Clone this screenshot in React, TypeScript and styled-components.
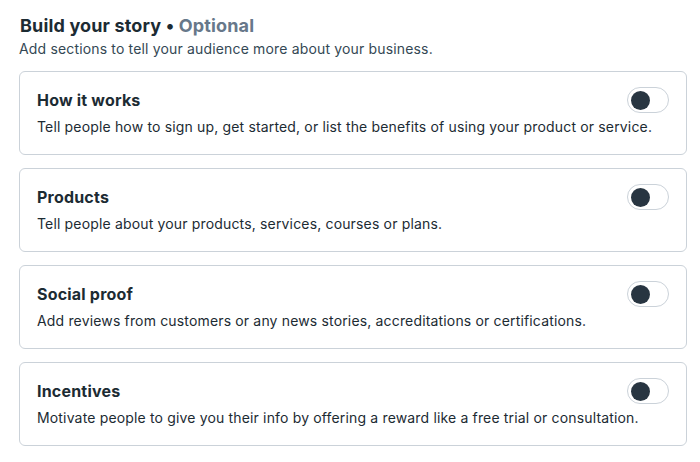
import React from "react";
import styled, { createGlobalStyle } from "styled-components";

const GlobalStyle = createGlobalStyle`
  html, body {
    margin: 0;
    padding: 0;
    background: #ffffff;
  }
  body {
    font-family: Inter, "Noto Sans", "Liberation Sans", sans-serif;
    color: #1c2b33;
  }
`;

const Page = styled.div`
  width: 700px;
  padding: 14px 13px 0 19px;
  box-sizing: border-box;
`;

const Heading = styled.h2`
  margin: 0 0 0 1px;
  font-size: 18px;
  line-height: 24px;
  font-weight: 700;
  color: #1c2b33;
  letter-spacing: 0.15px;
`;

const Muted = styled.span`
  color: #67788a;
`;

const Subtitle = styled.p`
  margin: 1px 0 0 0;
  font-size: 14px;
  line-height: 20px;
  color: #344854;
  letter-spacing: 0.16px;
`;

const List = styled.div`
  display: flex;
  flex-direction: column;
  gap: 13px;
  margin-top: 12px;
`;

const Card = styled.div`
  height: 84px;
  box-sizing: border-box;
  border: 1px solid #cbd2d9;
  border-radius: 6px;
  padding: 15px 17px 0 17px;
  display: flex;
  flex-direction: column;
`;

const CardHead = styled.div`
  display: flex;
  align-items: center;
  justify-content: space-between;
  height: 26px;
`;

const CardTitle = styled.div`
  font-size: 16px;
  font-weight: 700;
  color: #1c2b33;
  letter-spacing: 0.2px;
`;

const CardText = styled.div`
  margin-top: 4px;
  font-size: 14px;
  line-height: 20px;
  color: #1c2b33;
  letter-spacing: 0.16px;
`;

const Toggle = styled.button<{ $on?: boolean }>`
  width: 42px;
  height: 26px;
  margin-right: 0;
  padding: 0 3px;
  box-sizing: border-box;
  border: 1px solid #cbd2d9;
  border-radius: 13px;
  background: #ffffff;
  display: flex;
  align-items: center;
  justify-content: ${(p) => (p.$on ? "flex-end" : "flex-start")};
  cursor: pointer;
`;

const Knob = styled.span`
  width: 19px;
  height: 19px;
  border-radius: 50%;
  background: #283541;
`;

const sections = [
  {
    title: "How it works",
    text: "Tell people how to sign up, get started, or list the benefits of using your product or service.",
  },
  {
    title: "Products",
    text: "Tell people about your products, services, courses or plans.",
  },
  {
    title: "Social proof",
    text: "Add reviews from customers or any news stories, accreditations or certifications.",
  },
  {
    title: "Incentives",
    text: "Motivate people to give you their info by offering a reward like a free trial or consultation.",
  },
];

export default function App() {
  return (
    <>
      <GlobalStyle />
      <Page>
        <Heading>
          Build your story • <Muted>Optional</Muted>
        </Heading>
        <Subtitle>Add sections to tell your audience more about your business.</Subtitle>
        <List>
          {sections.map((s) => (
            <Card key={s.title}>
              <CardHead>
                <CardTitle>{s.title}</CardTitle>
                <Toggle aria-label={s.title}>
                  <Knob />
                </Toggle>
              </CardHead>
              <CardText>{s.text}</CardText>
            </Card>
          ))}
        </List>
      </Page>
    </>
  );
}
